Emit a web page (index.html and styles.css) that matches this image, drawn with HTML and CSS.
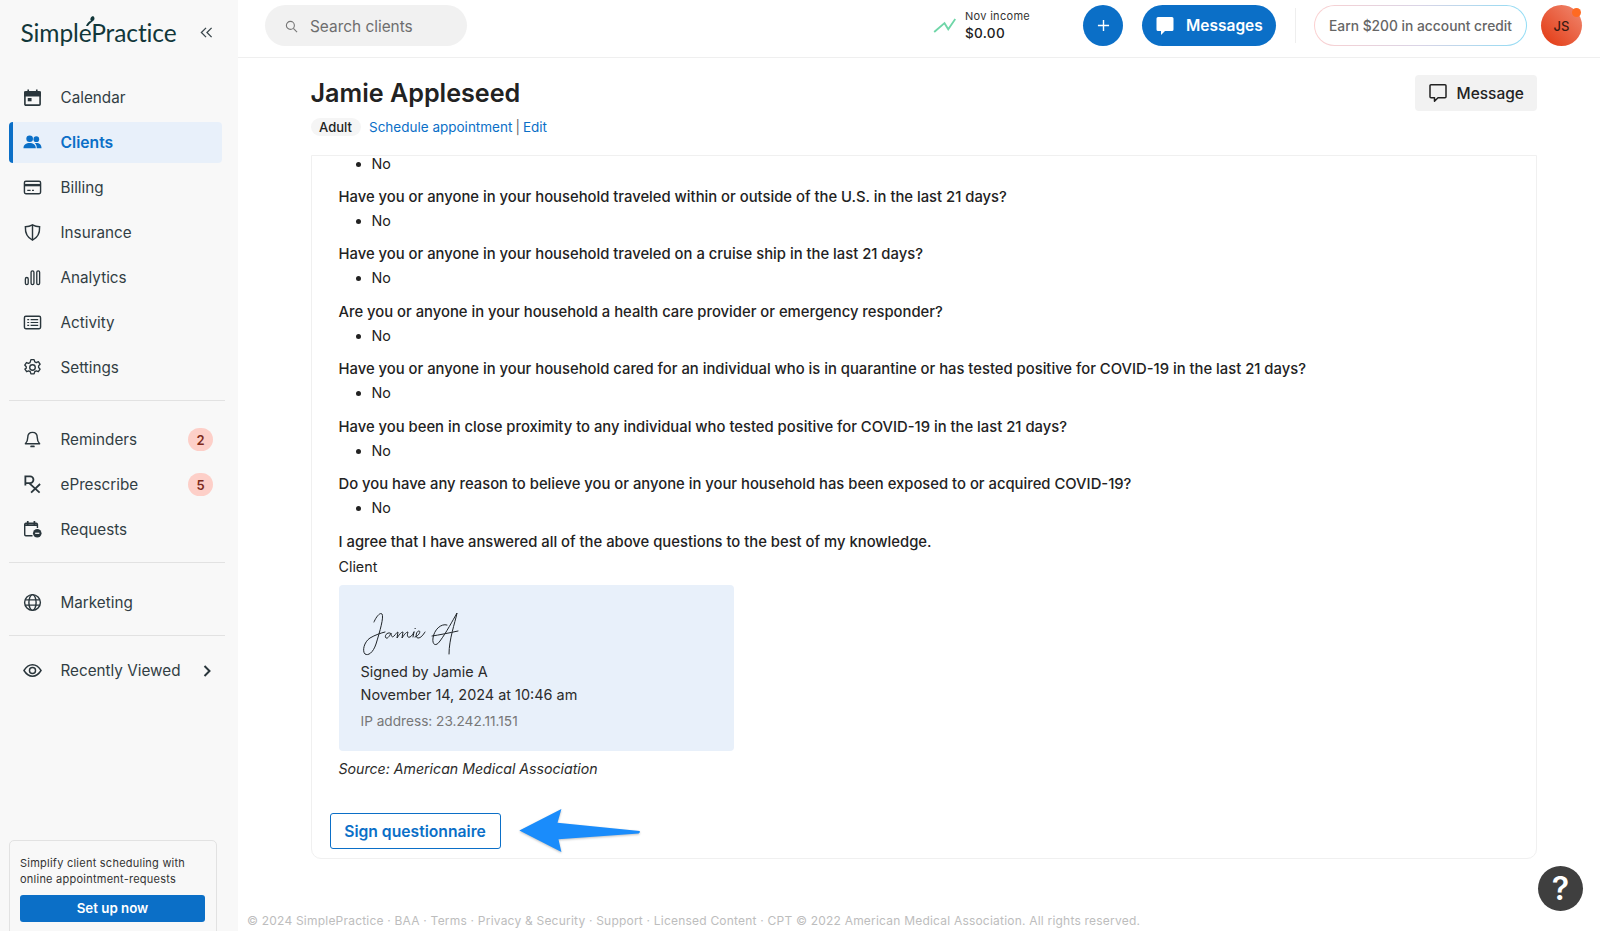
FILE: index.html
```html
<!DOCTYPE html>
<html lang="en">
<head>
<meta charset="utf-8">
<title>Jamie Appleseed - SimplePractice</title>
<link rel="stylesheet" href="styles.css">
</head>
<body>
<aside class="sidebar">
  <div class="brand">
    <span class="logo">SimplePractice<svg class="sprout" viewBox="0 0 12 12"><path d="M2 11C3 8 5 6 7 6C6 5 6 2 9 1C11 2 11 5 9 6C8 7 6 8 4 11Z" fill="#12373a"/></svg></span>
    <svg class="collapse" viewBox="0 0 14 14"><path d="M6.500 2L1.500 7L6.500 12M12.500 2L7.500 7L12.500 12" fill="none" stroke="#3b474d" stroke-width="1.400"/></svg>
  </div>
  <nav class="nav nav-main">
    <a class="item"><svg class="ic" viewBox="0 0 20 20"><path d="M3 4h14a1 1 0 0 1 1 1v12a1 1 0 0 1-1 1H3a1 1 0 0 1-1-1V5a1 1 0 0 1 1-1Z" fill="none" stroke="#2a363c" stroke-width="1.700"/><path d="M2 4.500h16V8H2zM5.500 1.500v3M14.500 1.500v3" stroke="#2a363c" stroke-width="1.700" fill="#2a363c"/><rect x="5" y="10.500" width="4" height="3.500" fill="#2a363c"/></svg><span>Calendar</span></a>
    <a class="item active"><svg class="ic" viewBox="0 0 20 20"><circle cx="7" cy="6" r="3.500" fill="#0b6fc7"/><circle cx="14" cy="6.500" r="3" fill="#0b6fc7"/><path d="M0.500 16c0-4 3-5.500 6.500-5.500s6.500 1.500 6.500 5.500ZM14.500 16c0-2-.5-4-2-5.300 4-.7 7 1 7 5.300Z" fill="#0b6fc7"/></svg><span>Clients</span></a>
    <a class="item"><svg class="ic" viewBox="0 0 20 20"><rect x="1.500" y="3.500" width="17" height="13" rx="1.500" fill="none" stroke="#2a363c" stroke-width="1.500"/><path d="M1.500 7.500h17" stroke="#2a363c" stroke-width="2.500"/><path d="M4.500 13h3.500M9.500 13h2" stroke="#2a363c" stroke-width="1.200"/></svg><span>Billing</span></a>
    <a class="item"><svg class="ic" viewBox="0 0 20 20"><path d="M10 2c2.500 1.500 5 2 7.500 2 .3 7-2 11.500-7.500 14C4.500 15.500 2.200 11 2.500 4 5 4 7.500 3.500 10 2Z" fill="none" stroke="#2a363c" stroke-width="1.500"/><path d="M10 2v16" stroke="#2a363c" stroke-width="1.500"/></svg><span>Insurance</span></a>
    <a class="item"><svg class="ic" viewBox="0 0 20 20"><g fill="none" stroke="#2a363c" stroke-width="1.400"><rect x="2.500" y="10" width="3" height="7.500" rx="1.500"/><rect x="8.500" y="3" width="3" height="14.500" rx="1.500"/><rect x="14.500" y="3" width="3" height="14.500" rx="1.500"/></g></svg><span>Analytics</span></a>
    <a class="item"><svg class="ic" viewBox="0 0 20 20"><rect x="1.500" y="3.500" width="17" height="13" rx="1.500" fill="none" stroke="#2a363c" stroke-width="1.500"/><path d="M4.500 7h2M8 7h8M4.500 10h2M8 10h8M4.500 13h2M8 13h8" stroke="#2a363c" stroke-width="1.300"/></svg><span>Activity</span></a>
    <a class="item"><svg class="ic" viewBox="0 0 24 24"><path d="M10 2h4l.9 2.900 1.900.9 2.600-1.100 2.200 3.200-1.900 2.100v2l1.900 2.100-2.200 3.200-2.600-1.100-1.900.9-.9 2.900h-4l-.9-2.900-1.900-.9-2.600 1.100-2.200-3.200L4.100 13v-2L2.200 8.900l2.200-3.200L7 6.800l1.900-.9Z" fill="none" stroke="#2a363c" stroke-width="1.700" stroke-linejoin="round"/><circle cx="12" cy="12" r="3.500" fill="none" stroke="#2a363c" stroke-width="1.700"/></svg><span>Settings</span></a>
  </nav>
  <hr class="rule">
  <nav class="nav">
    <a class="item"><svg class="ic" viewBox="0 0 20 20"><path d="M10 2.500c3.500 0 5 2.500 5 5.500 0 3.500 1 5 2.500 6.500h-15C4 13 5 11.500 5 8c0-3 1.500-5.500 5-5.500Z" fill="none" stroke="#2a363c" stroke-width="1.500" stroke-linejoin="round"/><path d="M8.500 17.300h3" stroke="#2a363c" stroke-width="1.800" stroke-linecap="round"/></svg><span>Reminders</span><b class="badge">2</b></a>
    <a class="item"><svg class="ic" viewBox="0 0 20 20"><path d="M2.500 11V1.500h5a3.500 3.500 0 0 1 0 7h-5M6.500 8.500l11 10M18 9.500 8.500 18.500" fill="none" stroke="#2a363c" stroke-width="1.900"/></svg><span>ePrescribe</span><b class="badge">5</b></a>
    <a class="item"><svg class="ic" viewBox="0 0 20 20"><path d="M10 16.500H3a1.200 1.200 0 0 1-1.200-1.200V4.500A1.200 1.200 0 0 1 3 3.500h11a1.200 1.200 0 0 1 1.200 1v4" fill="none" stroke="#2a363c" stroke-width="1.500"/><path d="M5 1v3.500M12 1v3.500M2 5.500h13" stroke="#2a363c" stroke-width="1.800"/><circle cx="15" cy="14" r="4.500" fill="#2a363c"/><path d="M12.800 14h4.400" stroke="#f8f8f8" stroke-width="1.300"/></svg><span>Requests</span></a>
  </nav>
  <hr class="rule">
  <nav class="nav">
    <a class="item"><svg class="ic" viewBox="0 0 20 20"><g fill="none" stroke="#2a363c" stroke-width="1.500"><circle cx="10" cy="10" r="8.300"/><ellipse cx="10" cy="10" rx="3.800" ry="8.300"/><path d="M2.200 7.200h15.600M2.200 12.800h15.600"/></g></svg><span>Marketing</span></a>
  </nav>
  <hr class="rule rule-last">
  <nav class="nav">
    <a class="item"><svg class="ic" viewBox="0 0 20 20"><path d="M1 10c2.500-4 5.500-6 9-6s6.500 2 9 6c-2.500 4-5.500 6-9 6s-6.500-2-9-6Z" fill="none" stroke="#2a363c" stroke-width="1.500"/><circle cx="10" cy="10" r="3.200" fill="none" stroke="#2a363c" stroke-width="1.500"/></svg><span>Recently Viewed</span><svg class="chev" viewBox="0 0 10 14"><path d="M2.500 2l5 5-5 5" fill="none" stroke="#2a363c" stroke-width="2"/></svg></a>
  </nav>
  <div class="promo">
    <p>Simplify client scheduling with online appointment-requests</p>
    <a class="promo-btn"><span>Set up now</span></a>
  </div>
</aside>

<div class="main">
  <header class="topbar">
    <div class="search"><svg class="search-ic" viewBox="0 0 14 14"><circle cx="5.800" cy="5.800" r="4.300" fill="none" stroke="#777" stroke-width="1.200"/><path d="M9 9l4 4" stroke="#777" stroke-width="1.200"/></svg><span>Search clients</span></div>
    <div class="top-right">
      <div class="income">
        <svg class="trend" viewBox="0 0 24 16"><path d="M1 15l11-9.500 4 6.500L23.500 1" fill="none" stroke="#6fd6a8" stroke-width="2"/></svg>
        <div class="income-text"><small>Nov income</small><strong>$0.00</strong></div>
      </div>
      <a class="plus"><svg viewBox="0 0 14 14"><path d="M7 1v12M1 7h12" stroke="#fff" stroke-width="1.500"/></svg></a>
      <a class="messages"><svg viewBox="0 0 20 20"><path d="M3 1h14a1.500 1.500 0 0 1 1.500 1.500v11A1.500 1.500 0 0 1 17 15h-7l-4 4v-4H3a1.500 1.500 0 0 1-1.500-1.500v-11A1.500 1.500 0 0 1 3 1Z" fill="#fff"/></svg><span>Messages</span></a>
      <span class="vline"></span>
      <a class="earn"><span>Earn $200 in account credit</span></a>
      <div class="avatar">JS<i class="dot"></i></div>
    </div>
  </header>

  <section class="content">
    <div class="head">
      <div>
        <h1>Jamie Appleseed</h1>
        <div class="meta"><span class="tag">Adult</span><a>Schedule appointment</a><span class="sep">|</span><a>Edit</a></div>
      </div>
      <a class="msg-btn"><svg viewBox="0 0 20 20"><path d="M3 1.800h14a1 1 0 0 1 1 1v11a1 1 0 0 1-1 1h-7l-3.500 3.400v-3.400H3a1 1 0 0 1-1-1v-11a1 1 0 0 1 1-1Z" fill="none" stroke="#222" stroke-width="1.500" stroke-linejoin="round"/></svg><span>Message</span></a>
    </div>

    <div class="card">
      <ul class="answer first"><li>No</li></ul>
      <p class="q">Have you or anyone in your household traveled within or outside of the U.S. in the last 21 days?</p>
      <ul class="answer"><li>No</li></ul>
      <p class="q">Have you or anyone in your household traveled on a cruise ship in the last 21 days?</p>
      <ul class="answer"><li>No</li></ul>
      <p class="q">Are you or anyone in your household a health care provider or emergency responder?</p>
      <ul class="answer"><li>No</li></ul>
      <p class="q">Have you or anyone in your household cared for an individual who is in quarantine or has tested positive for COVID-19 in the last 21 days?</p>
      <ul class="answer"><li>No</li></ul>
      <p class="q">Have you been in close proximity to any individual who tested positive for COVID-19 in the last 21 days?</p>
      <ul class="answer"><li>No</li></ul>
      <p class="q">Do you have any reason to believe you or anyone in your household has been exposed to or acquired COVID-19?</p>
      <ul class="answer"><li>No</li></ul>
      <p class="q">I agree that I have answered all of the above questions to the best of my knowledge.</p>
      <p class="client">Client</p>
      <div class="signature">
        <svg class="scribble" viewBox="0 0 100 46"><path d="M13 11C15 6 19 1 21 3C23 6 19 20 15 33C12 42 7 45 4 43C1 40 3 31 9 27C14 24 20 22 24 21M29 22C26 21 23 25 25 27C27 28 29 24 30 22C30 25 31 27 33 25C35 23 36 21 37 21L36 27C38 24 40 21 42 21L41 27C43 24 45 21 47 21C46 24 46 27 49 26C51 25 52 23 53 21M53 21L52 26M54 17.500L54.300 17.500M54 26C58 25 60 20 58 20C55 20 54 27 57 27C60 27 62 24 64 21" fill="none" stroke="#1f2428" stroke-width="1" stroke-linecap="round" stroke-linejoin="round"/><path d="M86 14C80 12 73 19 72 27C71 34 75 36 79 30C85 22 92 9 96 2C94 12 88 28 88 43M71 25C78 24 88 22 97 20" fill="none" stroke="#1f2428" stroke-width="1" stroke-linecap="round"/></svg>
        <p class="signed">Signed by Jamie A</p>
        <p class="signed">November 14, 2024 at 10:46 am</p>
        <p class="ip">IP address: 23.242.11.151</p>
      </div>
      <p class="source">Source: American Medical Association</p>
      <a class="sign-btn"><span>Sign questionnaire</span></a>
      <svg class="arrow" viewBox="0 0 126 46"><path d="M1 24L44 2L40 16L124 24.500Q125 26 123 27L41 33L44 46Z" fill="#1a8cfb"/></svg>
    </div>
    <footer class="foot">© 2024 SimplePractice · BAA · Terms · Privacy &amp; Security · Support · Licensed Content · CPT © 2022 American Medical Association. All rights reserved.</footer>
  </section>
  <a class="help">?</a>
</div>
</body>
</html>
```

FILE: styles.css
```css
* { box-sizing: border-box; }
html, body { margin: 0; height: 931px; overflow: hidden; }
body { display: flex; font-family: Inter, "Liberation Sans", sans-serif; color: #222; background: #fff; font-size: 15px; }
p { margin: 0; }

.sidebar { width: 238px; flex: none; height: 931px; background: #f8f8f8; padding: 0 0 0 9px; display: flex; flex-direction: column; overflow: hidden; }
.brand { height: 65px; padding: 0 11px 1px 11.500px; display: flex; align-items: center; justify-content: space-between; flex: none; width: 215px; }
.logo { position: relative; font-family: Lato, sans-serif; font-size: 24.500px; color: #12373a; letter-spacing: -0.1px; }
.sprout { position: absolute; left: 63.500px; top: -3px; width: 12px; height: 12px; }
.collapse { width: 13px; height: 13px; }
.nav { display: flex; flex-direction: column; gap: 4px; width: 213px; flex: none; }
.nav-main { margin-top: 11.500px; }
.item { height: 41px; display: flex; align-items: center; padding: 0 10px 0 14px; color: #323e44; font-size: 15.250px; border-radius: 4px; }
.item span { margin-left: 18.500px; flex: 1; }
.ic { width: 19px; height: 19px; flex: none; }
.active { background: #e8f0fa; color: #0b6fc7; font-weight: 600; font-size: 15.700px; border-left: 4px solid #0b6fc7; padding-left: 10px; }
.badge { width: 25px; height: 23px; border-radius: 12px; background: #fdcfc8; color: #7d2a1c; font-size: 13px; font-weight: 600; display: flex; align-items: center; justify-content: center; margin-right: -1px; }
.chev { width: 10px; height: 14px; }
.rule { width: 216px; height: 1px; margin: 12px 0 18.500px; border: 0; background: #e2e2e2; flex: none; }
.rule-last { margin-bottom: 14.500px; }
.promo { margin-top: auto; margin-bottom: -20px; width: 208px; height: 111px; flex: none; border: 1px solid #e2e2e2; border-radius: 5px; padding: 14px 10px 0 10px; background: #f8f8f8; }
.promo p { font-size: 11px; line-height: 16px; color: #333; letter-spacing: .24px; }
.promo-btn { display: flex; align-items: center; justify-content: center; margin-top: 8px; height: 27px; width: 185px; padding-bottom: 1px; background: #0b6fc7; color: #fff; border-radius: 3px; font-size: 13.300px; font-weight: 600; }

.main { flex: 1; min-width: 0; position: relative; height: 931px; display: flex; flex-direction: column; }
.topbar { height: 58px; flex: none; border-bottom: 1px solid #efefef; display: flex; align-items: flex-start; justify-content: space-between; padding: 5px 18px 0 27px; }
.search { width: 202px; height: 41px; border-radius: 21px; background: #f1f1f1; display: flex; align-items: center; padding-left: 20px; padding-top: 1px; color: #6e6e6e; font-size: 15.400px; }
.search-ic { width: 13px; height: 13px; margin-right: 12px; }
.top-right { display: flex; align-items: center; height: 41px; }
.income { display: flex; align-items: center; margin-right: 44px; }
.trend { width: 23px; height: 15px; margin-right: 9px; }
.income-text { display: flex; flex-direction: column; width: 74px; }
.income-text small { font-size: 11px; line-height: 15px; color: #333; letter-spacing: .3px; }
.income-text strong { font-size: 13.600px; line-height: 18px; font-weight: 500; color: #222; letter-spacing: .3px; }
.plus { width: 40px; height: 41px; border-radius: 50%; background: #0b6fc7; display: flex; align-items: center; justify-content: center; margin-right: 19px; }
.plus svg { width: 13px; height: 13px; }
.messages { width: 134px; height: 41px; border-radius: 21px; background: #0b6fc7; color: #fff; font-weight: 600; font-size: 15.500px; display: flex; align-items: center; padding-left: 13px; }
.messages svg { width: 20px; height: 20px; margin-right: 11px; }
.vline { width: 1px; height: 35px; background: #eee; margin: 0 18px 0 19px; }
.earn { width: 213px; height: 41px; border-radius: 21px; padding: 1px; background: linear-gradient(90deg, #fbd0d0, #d9d4e6 50%, #8fdcf5); display: flex; }
.earn span { flex: 1; border-radius: 20px; background: #fff; display: flex; align-items: center; justify-content: center; font-size: 13.800px; font-weight: 500; color: #666; }
.avatar { position: relative; width: 41px; height: 41px; margin-left: 14px; border-radius: 50%; background: linear-gradient(45deg, #e2360f, #f08a72); display: flex; align-items: center; justify-content: center; font-size: 13px; font-weight: 500; color: #3a1a12; }
.dot { position: absolute; right: 1px; top: 3px; width: 9px; height: 9px; border-radius: 50%; background: #ff6a22; }

.content { flex: 1; min-height: 0; padding: 0 63px 0 72.500px; display: flex; flex-direction: column; position: relative; }
.head { display: flex; justify-content: space-between; align-items: flex-start; height: 97px; padding-top: 17px; flex: none; }
h1 { margin: 0; font-size: 25.150px; line-height: 36px; font-weight: 600; color: #222; }
.meta { display: flex; align-items: center; gap: 3px; margin-top: 7px; font-size: 13.500px; color: #0b6fc7; white-space: pre; }
.tag { background: #f5f5f5; color: #222; font-weight: 500; font-size: 13px; border-radius: 10px; height: 18px; width: 50px; display: flex; align-items: center; justify-content: center; margin-right: 5.500px; }
.sep { color: #666; }
.msg-btn { width: 122px; height: 36px; background: #f2f2f2; border-radius: 4px; display: flex; align-items: center; padding-left: 13px; font-size: 15.500px; font-weight: 500; color: #222; }
.msg-btn svg { width: 20px; height: 20px; margin-right: 8.500px; }

.card { position: relative; height: 704px; flex: none; border: 1px solid #f0f0f0; border-radius: 0 0 10px 10px; padding: 0 27px; overflow: hidden; }
.answer { margin: 0; padding: 0 0 0 33px; line-height: 24px; height: 33.500px; font-size: 14.300px; }
.first { margin-top: -4px; height: 32.500px; }
.q { font-size: 14.800px; line-height: 24px; font-weight: 500; color: #222; white-space: nowrap; }
.client { font-size: 14.300px; line-height: 24px; margin-top: 1px; }
.signature { width: 395px; height: 166px; margin-top: 6px; background: #e8f0fa; border-radius: 4px; padding: 26px 22px 0; }
.scribble { display: block; width: 100px; height: 46px; margin-bottom: 3px; }
.signed { font-size: 14.450px; line-height: 23px; color: #2b2b2b; }
.ip { font-size: 13.650px; line-height: 20px; margin-top: 5px; color: #777; }
.source { font-style: italic; font-size: 14.150px; line-height: 24px; margin-top: 6px; color: #2b2b2b; }
.sign-btn { display: flex; width: 171px; height: 36px; margin: 32px 0 0 -9px; padding-top: 2px; border: 1px solid #0b6fc7; border-radius: 3px; align-items: center; justify-content: center; color: #0b6fc7; font-weight: 600; font-size: 15.700px; }
.arrow { position: absolute; left: 205px; bottom: 6px; width: 126px; height: 45px; filter: drop-shadow(0 1px 1px rgba(0,0,0,.25)); }
.foot { margin: 54px 0 0 -63.500px; font-size: 12px; color: #bdbdbd; white-space: nowrap; letter-spacing: .21px; line-height: 16px; }
.help { position: absolute; right: 17px; bottom: 20px; width: 45px; height: 45px; border-radius: 50%; background: #3f3f3f; color: #fff; font-size: 32px; font-weight: 600; display: flex; align-items: center; justify-content: center; }
```
